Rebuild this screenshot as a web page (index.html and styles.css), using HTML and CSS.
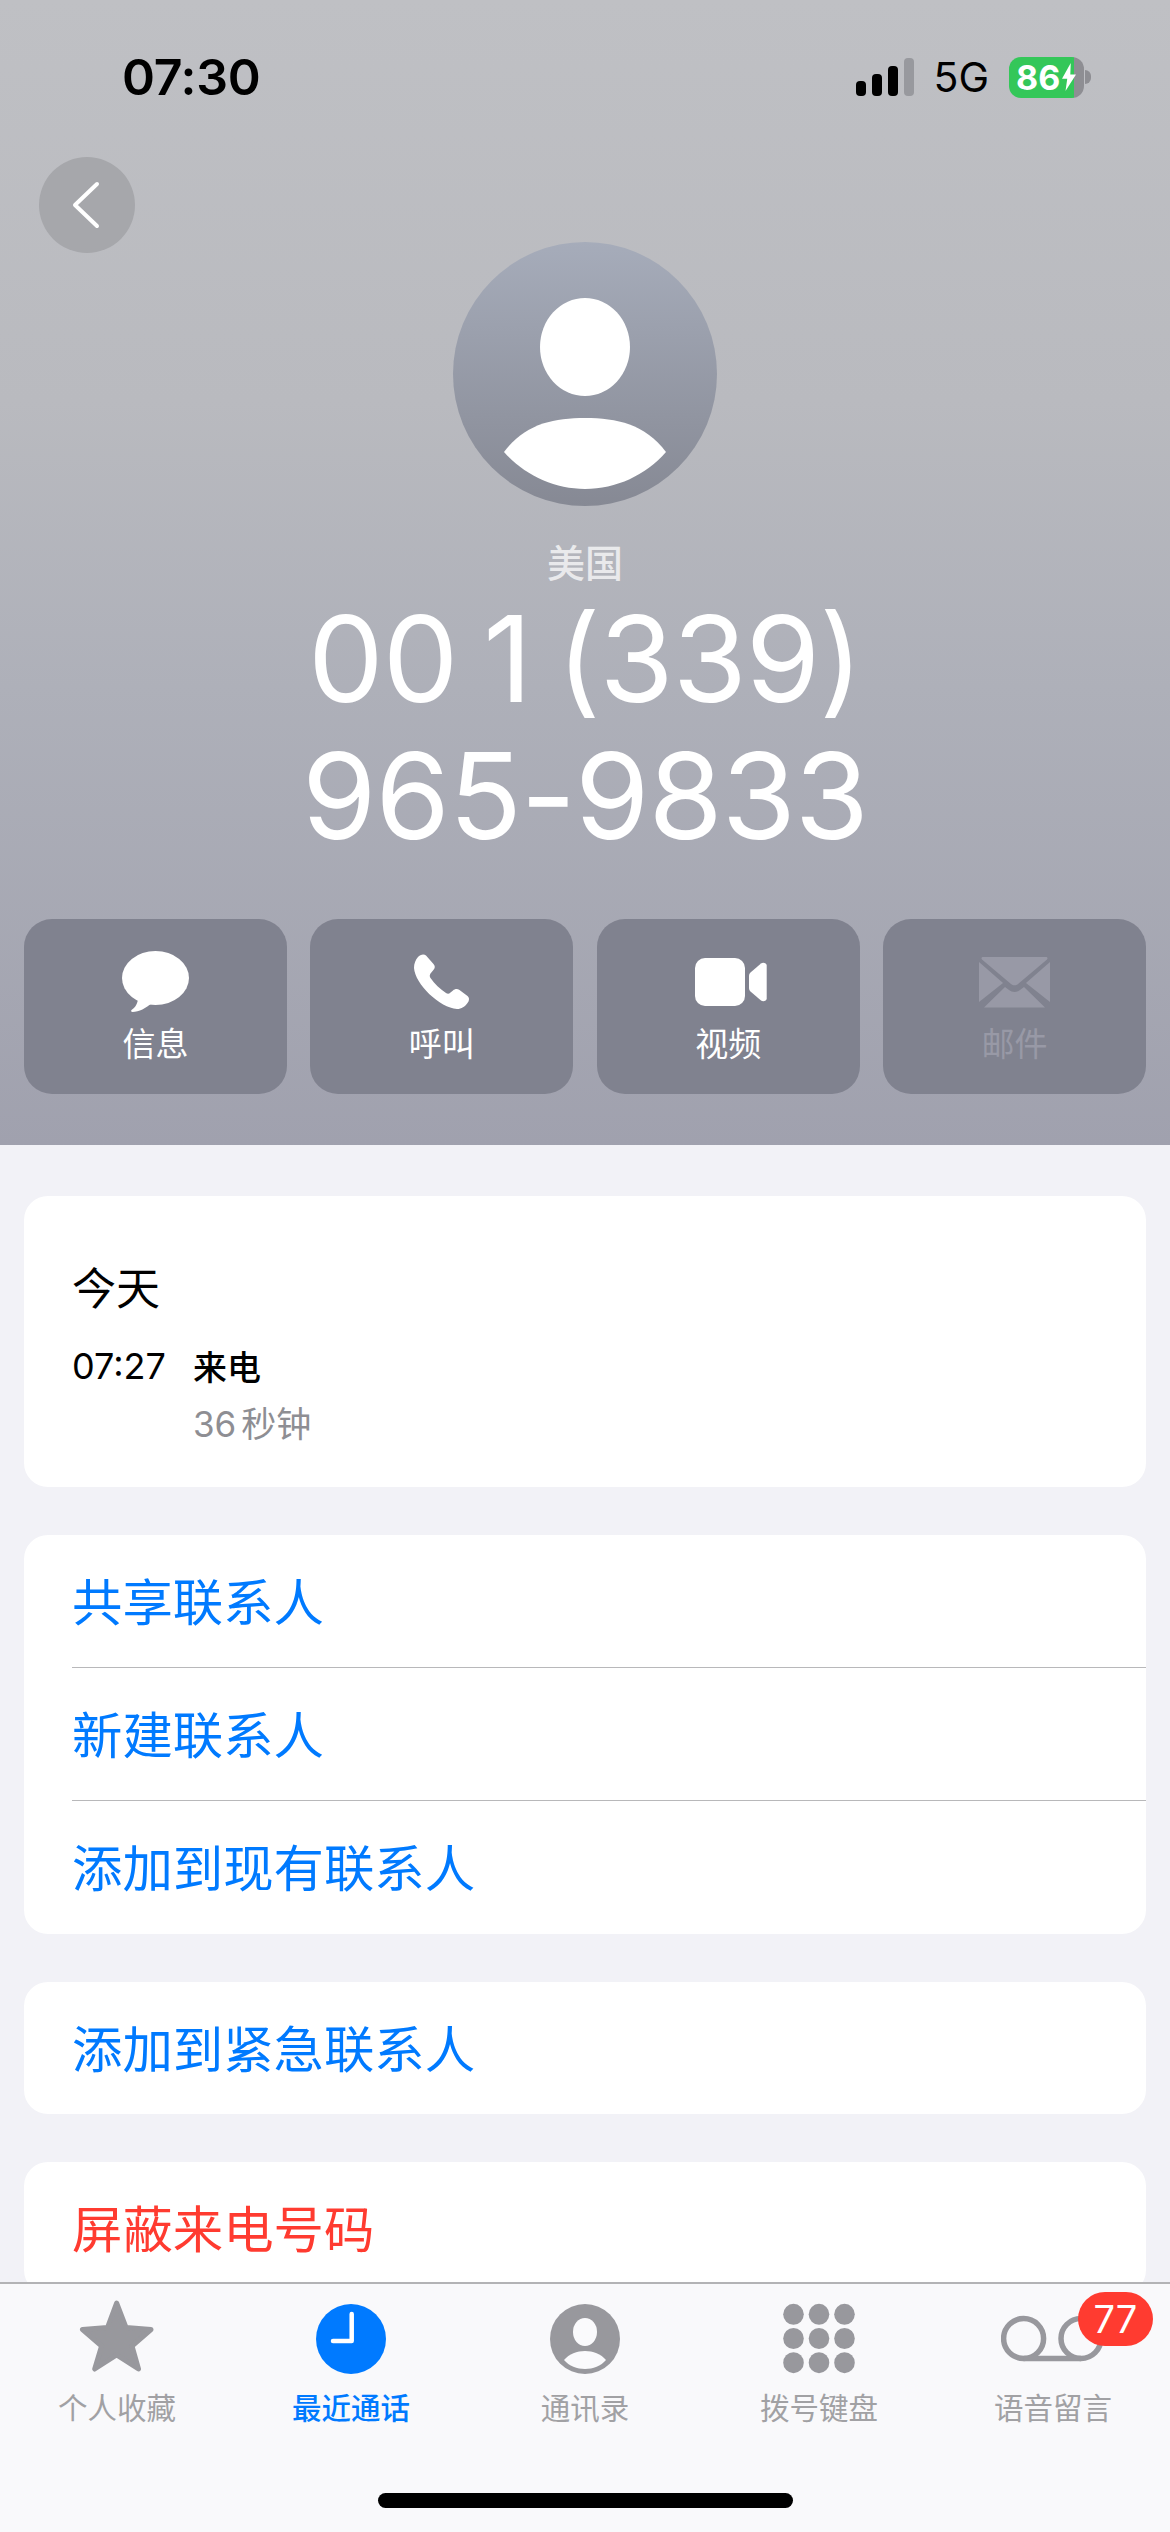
FILE: index.html
```html
<!DOCTYPE html>
<html>
<head lang="zh">
    <meta charset="UTF-8">
    <title>通话详情</title>
    <meta name="viewport" content="width=device-width,user-scalable=no" />
    <link rel="stylesheet" href="styles.css">
</head>
<body>
<section class="hero">
    <!-- 状态栏 -->
    <div class="status-bar">
        <span class="time">07:30</span>
        <div class="status-right">
            <svg class="signal" width="58" height="38" viewBox="0 0 58 38">
                <rect x="0" y="23" width="10" height="15" rx="4" fill="#000"/>
                <rect x="16" y="16" width="10" height="22" rx="4" fill="#000"/>
                <rect x="32" y="8" width="10" height="30" rx="4" fill="#000"/>
                <rect x="48" y="0" width="10" height="38" rx="4" fill="#98999e"/>
            </svg>
            <span class="net">5G</span>
            <div class="battery">
                <div class="battery-body">
                    <span class="battery-num">86</span>
                    <svg class="bolt" width="14" height="28" viewBox="0 0 16 32"><path d="M10 0 0 18h6L4 32 16 13H9.500z" fill="#fff"/></svg>
                </div>
                <span class="battery-nub"></span>
            </div>
        </div>
    </div>

    <div class="back-btn">
        <svg width="32" height="52" viewBox="0 0 32 52"><path d="M26 5 4 26l22 21" fill="none" stroke="#fff" stroke-width="4" stroke-linecap="round" stroke-linejoin="round"/></svg>
    </div>

    <div class="avatar">
        <svg width="264" height="264" viewBox="0 0 264 264">
            <ellipse cx="132" cy="105" rx="45" ry="49" fill="#fff"/>
            <path d="M51 210C72 182 100 176 132 176s60 6 81 34c-20 23-50 37-81 37s-61-14-81-37z" fill="#fff"/>
        </svg>
    </div>

    <div class="region">美国</div>
    <h1 class="number">00 1 (339)<br>965-9833</h1>

    <div class="actions">
        <div class="action">
            <div class="action-icon">
                <svg width="68" height="62" viewBox="0 0 68 62">
                    <ellipse cx="33.500" cy="27" rx="33.500" ry="27" fill="#fff"/>
                    <path d="M16 47c0 5-3 10-6.500 12-1 1 0 2 1 2C17 61 24 57 30 52z" fill="#fff"/>
                </svg>
            </div>
            <span>信息</span>
        </div>
        <div class="action">
            <div class="action-icon">
                <svg width="56" height="56" viewBox="0 0 56 56"><path d="M4 3C6 .5 10-.5 12 1.500L19.500 10c2 2 1.500 4.500-.5 6.500l-2.500 3c-1 1.500-1 3 0 4.500 4 6 9.500 11 15.500 15 1.500 1 3 1 4.500-.5l2.500-2c2-2 4.500-2 6.500-.5l8 6c2 1.500 2 4.500 0 7-2.500 3.500-6 6-10.500 6C26 54 1 30 0 14 0 9.500 1.500 6 4 3z" fill="#fff"/></svg>
            </div>
            <span>呼叫</span>
        </div>
        <div class="action">
            <div class="action-icon icon-video">
                <svg width="72" height="48" viewBox="0 0 72 48">
                    <rect x="0" y="0" width="50" height="48" rx="10" fill="#fff"/>
                    <path d="M54 18c0-1.500.5-2.500 1.500-3.500L66 5.500c2-1.500 5.700-.5 5.700 2v33c0 2.500-3.700 3.500-5.700 2L55.500 33.500c-1-1-1.500-2-1.500-3.500z" fill="#fff"/>
                </svg>
            </div>
            <span>视频</span>
        </div>
        <div class="action action-off">
            <div class="action-icon">
                <svg width="71" height="51" viewBox="0 0 71 51" fill="#9899a6">
                    <path d="M4 0h63c1.500 0 2 1.500 1 2.500L39 27c-2 1.800-5 1.800-7 0L3 2.500C2 1.500 2.500 0 4 0z"/>
                    <path d="M0 5l24 21L0 45z"/>
                    <path d="M71 5 47 26l24 19z"/>
                    <path d="M5 50.500 26 30l4 3c3 2.500 8 2.500 11 0l4-3 21 20.500z"/>
                </svg>
            </div>
            <span>邮件</span>
        </div>
    </div>
</section>

<section class="detail">
    <div class="card card-log">
        <div class="log-day">今天</div>
        <div class="log-row">
            <span class="log-time">07:27</span>
            <div class="log-info">
                <div class="log-type">来电</div>
                <div class="log-len">36 秒钟</div>
            </div>
        </div>
    </div>

    <ul class="card card-list">
        <li class="link">共享联系人</li>
        <li class="link">新建联系人</li>
        <li class="link">添加到现有联系人</li>
    </ul>

    <ul class="card">
        <li class="link">添加到紧急联系人</li>
    </ul>

    <ul class="card">
        <li class="link link-red">屏蔽来电号码</li>
    </ul>
</section>

<!-- 底部标签栏 -->
<nav class="tabbar">
    <ul class="tabs">
        <li class="tab">
            <svg width="76" height="74" viewBox="0 0 76 74"><path d="M37.600 3 47 27.500l25 2-19 16.500 6.500 23-21.900-14-21.900 14L22.600 46 3.500 29.500l25-2z" fill="#98989d" stroke="#98989d" stroke-width="5" stroke-linejoin="round"/></svg>
            <span>个人收藏</span>
        </li>
        <li class="tab tab-on">
            <svg width="76" height="74" viewBox="0 0 76 74">
                <circle cx="38" cy="39" r="35" fill="#007aff"/>
                <path d="M38.700 14v27H20" fill="none" stroke="#fff" stroke-width="4.500" stroke-linecap="round" stroke-linejoin="round"/>
            </svg>
            <span>最近通话</span>
        </li>
        <li class="tab">
            <svg width="76" height="74" viewBox="0 0 76 74">
                <circle cx="38" cy="39" r="35" fill="#98989d"/>
                <ellipse cx="38" cy="32" rx="12" ry="14" fill="#fafafc"/>
                <path d="M17 60c5-6 13-9 21-9s16 3 21 9c-5 6-13 9-21 9s-16-3-21-9z" fill="#fafafc"/>
            </svg>
            <span>通讯录</span>
        </li>
        <li class="tab">
            <svg width="76" height="74" viewBox="0 0 76 74" fill="#98989d">
                <ellipse cx="12.500" cy="14.300" rx="10.300" ry="10.500"/><ellipse cx="38" cy="14.300" rx="10.300" ry="10.500"/><ellipse cx="63.500" cy="14.300" rx="10.300" ry="10.500"/>
                <ellipse cx="12.500" cy="38.500" rx="10.300" ry="10.500"/><ellipse cx="38" cy="38.500" rx="10.300" ry="10.500"/><ellipse cx="63.500" cy="38.500" rx="10.300" ry="10.500"/>
                <ellipse cx="12.500" cy="62.700" rx="10.300" ry="10.500"/><ellipse cx="38" cy="62.700" rx="10.300" ry="10.500"/><ellipse cx="63.500" cy="62.700" rx="10.300" ry="10.500"/>
            </svg>
            <span>拨号键盘</span>
        </li>
        <li class="tab">
            <svg width="104" height="74" viewBox="0 0 104 74" fill="none" stroke="#98989d" stroke-width="5.500">
                <circle cx="22.600" cy="38.500" r="20"/>
                <circle cx="80" cy="38.500" r="20"/>
                <path d="M22.600 58.500H80"/>
            </svg>
            <span>语音留言</span>
            <b class="badge">77</b>
        </li>
    </ul>
    <div class="home-bar"></div>
</nav>
</body>
</html>
```

FILE: styles.css
```css
html, body{
    height: 100%;
    padding: 0;
    margin: 0;
    width: 100%;
    overflow: hidden;
    background: #f2f2f7;
    font-family: Inter, "Noto Sans CJK SC", sans-serif;
}

ul, li{
    padding: 0;
    margin: 0;
    list-style: none;
}

body{
    position: relative;
}

.hero{
    height: 1145px;
    box-sizing: border-box;
    padding: 0 24px;
    background: linear-gradient(180deg, #bfc0c4 0%, #b9babf 35%, #aeb0b9 60%, #a0a1ae 100%);
    overflow: hidden;
}

.status-bar{
    display: flex;
    justify-content: space-between;
    align-items: center;
    height: 38px;
    padding: 58px 55px 0 98px;
}

.time{
    font-size: 50px;
    font-weight: 600;
    letter-spacing: -.3px;
    color: #000;
}

.status-right{
    display: flex;
    align-items: center;
}

.net{
    margin-left: 19px;
    font-size: 41px;
    color: #000;
}

.battery{
    display: flex;
    align-items: center;
    margin-left: 20px;
}

.battery-body{
    display: flex;
    align-items: center;
    box-sizing: border-box;
    width: 75px;
    height: 41px;
    padding-left: 7px;
    border-radius: 12px;
    background: linear-gradient(90deg, #34c759 87%, #8e8e93 87%);
}

.battery-num{
    font-size: 34px;
    font-weight: 700;
    color: #fff;
}

.bolt{
    flex: none;
    margin-left: 2px;
}

.battery-nub{
    width: 6px;
    height: 14px;
    margin-left: 1px;
    border-radius: 0 7px 7px 0;
    background: #8e8e93;
}

.back-btn{
    display: flex;
    align-items: center;
    justify-content: center;
    width: 96px;
    height: 96px;
    margin: 61px 0 0 15px;
    border-radius: 50%;
    background: #a6a7ab;
}

.avatar{
    width: 264px;
    height: 264px;
    margin: -11px auto 0;
    border-radius: 50%;
    overflow: hidden;
    background: linear-gradient(180deg, #a6acba 0%, #868994 100%);
}

.region{
    margin-top: 34px;
    text-align: center;
    font-size: 38px;
    line-height: 46px;
    font-weight: 500;
    color: rgba(255,255,255,.72);
}

.number{
    margin: 4px 0 0;
    text-align: center;
    font-size: 120px;
    line-height: 137px;
    font-weight: 400;
    letter-spacing: -1px;
    word-spacing: -7px;
    color: #fff;
}

.actions{
    display: grid;
    grid-template-columns: repeat(4, 263px);
    justify-content: space-between;
    margin-top: 55px;
}

.action{
    display: flex;
    flex-direction: column;
    align-items: center;
    height: 175px;
    box-sizing: border-box;
    padding-top: 31px;
    border-radius: 28px;
    background: #80828f;
    color: #fff;
    font-size: 33px;
    line-height: 40px;
}

.action-icon{
    display: flex;
    align-items: center;
    justify-content: center;
    height: 64px;
    margin-bottom: 10px;
}

.icon-video{
    margin-left: 6px;
}

.action-off{
    color: #9899a6;
}

.detail{
    padding: 51px 24px 0;
}

.card{
    margin-bottom: 48px;
    border-radius: 24px;
    background: #fff;
    overflow: hidden;
}

.card-list{
    padding-bottom: 1px;
}

.card-log{
    height: 291px;
    box-sizing: border-box;
    padding: 64px 48px 0;
}

.log-day{
    font-size: 44px;
    line-height: 58px;
    color: #000;
}

.log-row{
    display: flex;
    margin-top: 24px;
}

.log-time{
    width: 121px;
    font-size: 36px;
    line-height: 48px;
    color: #000;
}

.log-type{
    font-size: 34px;
    line-height: 52px;
    font-weight: 500;
    color: #000;
}

.log-len{
    margin-top: 4px;
    font-size: 35px;
    line-height: 52px;
    word-spacing: -5px;
    color: #8e8e93;
}

.link{
    height: 132px;
    margin-left: 48px;
    font-size: 50.400px;
    line-height: 135px;
    color: #007aff;
}

.link + .link{
    border-top: 1px solid #b8b8ba;
}

.link-red{
    color: #ff3b30;
}

.tabbar{
    position: absolute;
    left: 0;
    right: 0;
    bottom: 0;
    height: 250px;
    box-sizing: border-box;
    padding-top: 16px;
    border-top: 2px solid #b3b3b5;
    background: #f9f9fb;
}

.tabs{
    display: grid;
    grid-template-columns: repeat(5, 1fr);
}

.tab{
    position: relative;
    display: flex;
    flex-direction: column;
    align-items: center;
    font-size: 29.500px;
    line-height: 36px;
    color: #a1a1a4;
}

.tab svg{
    margin-bottom: 16px;
}

.tab-on{
    color: #007aff;
    font-weight: 500;
}

.badge{
    position: absolute;
    top: -8px;
    left: 142px;
    width: 75px;
    height: 54px;
    border-radius: 27px;
    background: #ff3b30;
    color: #fff;
    text-align: center;
    font-size: 38px;
    line-height: 54px;
    font-weight: 400;
}

.home-bar{
    width: 415px;
    height: 15px;
    margin: 67px auto 0;
    border-radius: 8px;
    background: #000;
}
```
